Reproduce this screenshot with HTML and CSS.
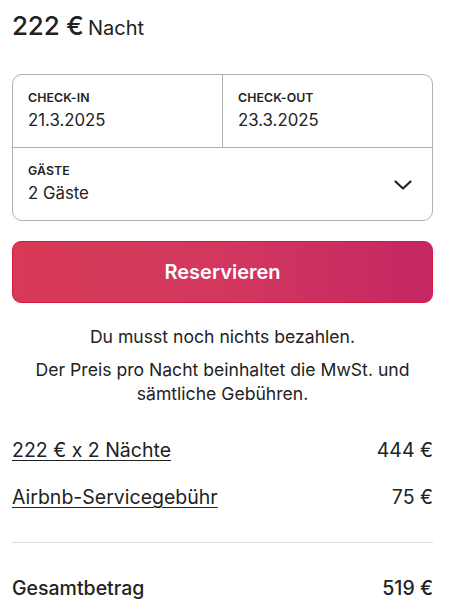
FILE: index.html
```html
<!DOCTYPE html>
<html lang="de">
<head>
<meta charset="utf-8">
<link rel="stylesheet" href="styles.css">
</head>
<body>
<div class="card">
  <div class="price"><span class="amount">222 €</span> <span class="unit">Nacht</span></div>
  <div class="picker">
    <div class="dates">
      <div class="field">
        <div class="label">CHECK-IN</div>
        <div class="value">21.3.2025</div>
      </div>
      <div class="field field-right">
        <div class="label">CHECK-OUT</div>
        <div class="value">23.3.2025</div>
      </div>
    </div>
    <div class="field guests">
      <div>
        <div class="label">GÄSTE</div>
        <div class="value">2 Gäste</div>
      </div>
      <svg class="chevron" width="18" height="10" viewBox="0 0 18 10"><path d="M1.5 1.5 L9 8.5 L16.5 1.5" fill="none" stroke="#222" stroke-width="2.2" stroke-linecap="round" stroke-linejoin="round"/></svg>
    </div>
  </div>
  <button class="reserve">Reservieren</button>
  <p class="note">Du musst noch nichts bezahlen.</p>
  <p class="note">Der Preis pro Nacht beinhaltet die MwSt. und<br>sämtliche Gebühren.</p>
  <div class="rows">
    <div class="row"><span class="link">222 € x 2 Nächte</span><span>444 €</span></div>
    <div class="row"><span class="link">Airbnb-Servicegebühr</span><span>75 €</span></div>
  </div>
  <div class="divider"></div>
  <div class="row total"><span>Gesamtbetrag</span><span>519 €</span></div>
</div>
</body>
</html>
```
FILE: styles.css
```css
* { box-sizing: border-box; }
html, body { margin: 0; padding: 0; background: #fff; }
body {
  font-family: "Inter", "Noto Sans", sans-serif;
  color: #222;
}
.card {
  width: 421px;
  margin-left: 12px;
  padding-top: 12px;
}
.price { line-height: 28px; height: 28px; white-space: nowrap; }
.amount { font-size: 26px; font-weight: 500; letter-spacing: -0.2px; }
.unit { font-size: 20px; font-weight: 400; }
.picker {
  margin-top: 34px;
  border: 1px solid #b0b0b0;
  border-radius: 10px;
  height: 147px;
  display: flex;
  flex-direction: column;
}
.dates {
  display: flex;
  height: 73px;
  border-bottom: 1px solid #b0b0b0;
}
.field {
  flex: 1;
  padding: 15px 15px 0 15px;
}
.field-right { border-left: 1px solid #b0b0b0; }
.label {
  font-size: 12.3px;
  font-weight: 600;
  line-height: 15px;
  letter-spacing: 0.1px;
}
.value {
  font-size: 16.8px;
  line-height: 21px;
  margin-top: 5px;
}
.guests {
  display: flex;
  justify-content: space-between;
  align-items: flex-start;
  padding-top: 15px;
  padding-right: 20px;
}
.chevron { margin-top: 17px; }
.reserve {
  display: block;
  width: 100%;
  height: 62px;
  margin-top: 20px;
  border: 1px solid #d91845;
  border-radius: 9px;
  background: linear-gradient(to right, #d63a55 0%, #d3375f 50%, #c42762 100%);
  color: #fff;
  font-family: "Inter", "Noto Sans", sans-serif;
  font-size: 20px;
  font-weight: 600;
  padding: 0;
}
.note {
  margin: 0;
  text-align: center;
  font-size: 17.6px;
  line-height: 24px;
}
.note:first-of-type { margin-top: 22px; }
.note + .note { margin-top: 9px; }
.rows { margin-top: 32px; }
.row {
  display: flex;
  justify-content: space-between;
  font-size: 19.5px;
  line-height: 24px;
}
.row + .row { margin-top: 23px; }
.link { text-decoration: underline; text-underline-offset: 3px; text-decoration-thickness: 1px; }
.divider {
  margin-top: 33px;
  height: 1px;
  background: #dddddd;
}
.total { margin-top: 33px; font-weight: 500; }
```
